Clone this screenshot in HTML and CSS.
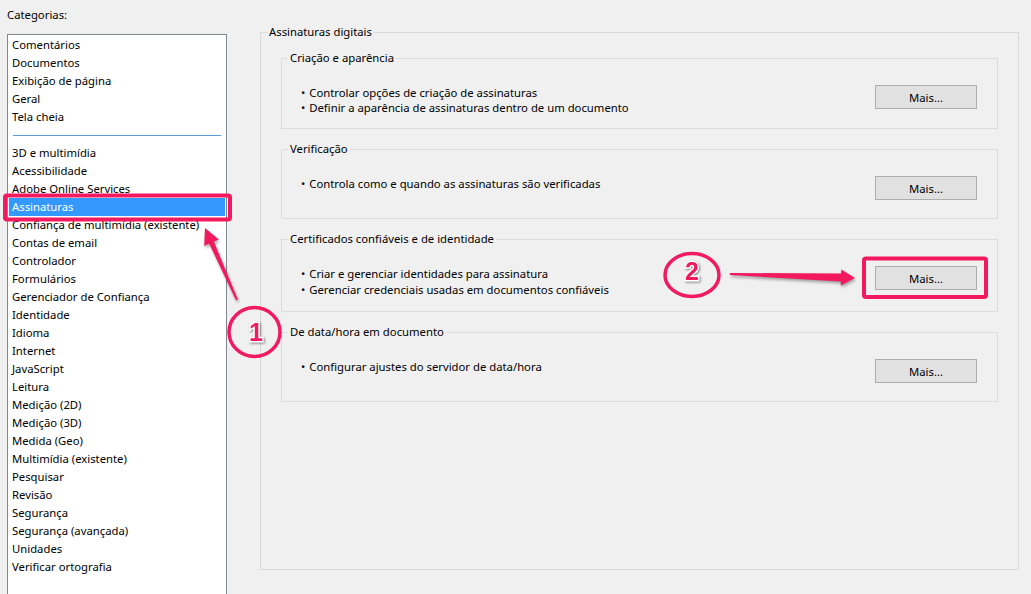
FILE: index.html
```html
<!DOCTYPE html>
<html lang="pt-BR">
<head>
  <meta charset="UTF-8" />
  <title>Preferências - Assinaturas</title>
  <meta name="viewport" content="width=device-width, initial-scale=1.0" />
  <link rel="stylesheet" href="styles.css">
</head>
<body>
  <div class="categories">
    <div class="cat-label">Categorias:</div>
    <ul class="cat-list">
      <li>Comentários</li>
      <li>Documentos</li>
      <li>Exibição de página</li>
      <li>Geral</li>
      <li>Tela cheia</li>
      <li class="sep"></li>
      <li>3D e multimídia</li>
      <li>Acessibilidade</li>
      <li>Adobe Online Services</li>
      <li class="selected">Assinaturas</li>
      <li>Confiança de multimídia (existente)</li>
      <li>Contas de email</li>
      <li>Controlador</li>
      <li>Formulários</li>
      <li>Gerenciador de Confiança</li>
      <li>Identidade</li>
      <li>Idioma</li>
      <li>Internet</li>
      <li>JavaScript</li>
      <li>Leitura</li>
      <li>Medição (2D)</li>
      <li>Medição (3D)</li>
      <li>Medida (Geo)</li>
      <li>Multimídia (existente)</li>
      <li>Pesquisar</li>
      <li>Revisão</li>
      <li>Segurança</li>
      <li>Segurança (avançada)</li>
      <li>Unidades</li>
      <li>Verificar ortografia</li>
    </ul>
  </div>

  <fieldset class="panel">
    <legend>Assinaturas digitais</legend>
    <div class="sections">
      <fieldset class="group">
        <legend>Criação e aparência</legend>
        <div class="row">
          <ul class="bullets">
            <li>Controlar opções de criação de assinaturas</li>
            <li>Definir a aparência de assinaturas dentro de um documento</li>
          </ul>
          <button>Mais...</button>
        </div>
      </fieldset>

      <fieldset class="group">
        <legend>Verificação</legend>
        <div class="row">
          <ul class="bullets">
            <li>Controla como e quando as assinaturas são verificadas</li>
          </ul>
          <button>Mais...</button>
        </div>
      </fieldset>

      <fieldset class="group">
        <legend>Certificados confiáveis e de identidade</legend>
        <div class="row">
          <ul class="bullets spaced">
            <li>Criar e gerenciar identidades para assinatura</li>
            <li>Gerenciar credenciais usadas em documentos confiáveis</li>
          </ul>
          <button>Mais...</button>
        </div>
      </fieldset>

      <fieldset class="group">
        <legend>De data/hora em documento</legend>
        <div class="row">
          <ul class="bullets">
            <li>Configurar ajustes do servidor de data/hora</li>
          </ul>
          <button>Mais...</button>
        </div>
      </fieldset>
    </div>
  </fieldset>

  <!-- tutorial markup drawn on top of the dialog -->
  <svg class="marks" width="1031" height="594" viewBox="0 0 1031 594">
    <g class="pink">
      <rect x="5" y="195.5" width="225" height="24" rx="2" />
      <rect x="864" y="258.5" width="122" height="38.5" rx="2" />
      <ellipse cx="254.5" cy="332" rx="25.5" ry="24.5" />
      <ellipse cx="692" cy="275" rx="27" ry="21.5" />
    </g>
    <g class="arrow">
      <polygon points="237.9,299.6 213.8,241.6 218.8,239.4 205,228 204.2,245.9 209.2,243.6 236.1,300.4" />
      <polygon points="730,273 841.1,273.5 841.3,269.5 855,278 840.7,285.5 840.9,281.5 730,275" />
    </g>
    <text class="num" x="256" y="341">1</text>
    <text class="num" x="692" y="280">2</text>
  </svg>
</body>
</html>
```

FILE: styles.css
```css
body {
  margin: 0;
  padding: 0 0 0 7px;
  height: 594px;
  overflow: hidden;
  background: #f0f0f0;
  font-family: 'Noto Sans', sans-serif;
  font-size: 11.3px;
  color: #000;
  display: flex;
  align-items: flex-start;
  position: relative;
}

ul {
  list-style: none;
  margin: 0;
  padding: 0;
}

.categories {
  width: 220px;
  padding-top: 8px;
}

.cat-label {
  line-height: 14px;
  margin-bottom: 12px;
}

.cat-list {
  background: white;
  border: 1px solid #828790;
  height: 580px;
  padding-top: 1px;
  box-sizing: border-box;
}

.cat-list li {
  line-height: 18px;
  padding-left: 3px;
  margin: 0 1px;
  white-space: nowrap;
}

.cat-list .sep {
  height: 1px;
  background: #5a9be0;
  margin: 9px 5px 8px 5px;
  padding: 0;
}

.cat-list .selected {
  background: #3399ff;
  color: white;
}

fieldset {
  margin: 0;
  padding: 0;
  min-width: 0;
  box-sizing: border-box;
}

legend {
  padding: 0 2px;
  margin-left: 6px;
  line-height: 14px;
}

.panel {
  margin: 25px 0 0 33px;
  width: 759px;
  height: 545px;
  border: 1px solid #d9d9d9;
}

.sections {
  padding: 12px 20px 0 20px;
}

.group {
  border: 1px solid #dcdcdc;
  margin-bottom: 13px;
  padding: 0 20px 13px 19px;
}

.group legend {
  margin-left: -13px;
}

.row {
  display: flex;
  justify-content: space-between;
  align-items: flex-start;
  margin-top: 20px;
  min-height: 29px;
}

.bullets li {
  line-height: 15px;
}

.bullets li::before {
  content: '\2022';
  margin-right: 4px;
}

.bullets.spaced li {
  line-height: 16px;
}

button {
  width: 102px;
  height: 24px;
  background: #e1e1e1;
  border: 1px solid #adadad;
  font-family: inherit;
  font-size: 11.3px;
  color: #000;
  padding: 0;
}

.marks {
  position: absolute;
  top: 0;
  left: 0;
  pointer-events: none;
}

.pink {
  fill: none;
  stroke: #f2195e;
  stroke-width: 4;
}

.pink ellipse {
  stroke-width: 3.5;
}

.arrow {
  fill: #f2195e;
  filter: drop-shadow(1px 2px 1.5px rgba(0, 0, 0, 0.35));
}

.num {
  font-family: 'Liberation Sans', sans-serif;
  font-weight: bold;
  font-size: 25px;
  text-anchor: middle;
  fill: #f2195e;
  stroke: white;
  stroke-width: 3px;
  paint-order: stroke;
  filter: drop-shadow(1px 1px 1px rgba(0, 0, 0, 0.45));
}
```
